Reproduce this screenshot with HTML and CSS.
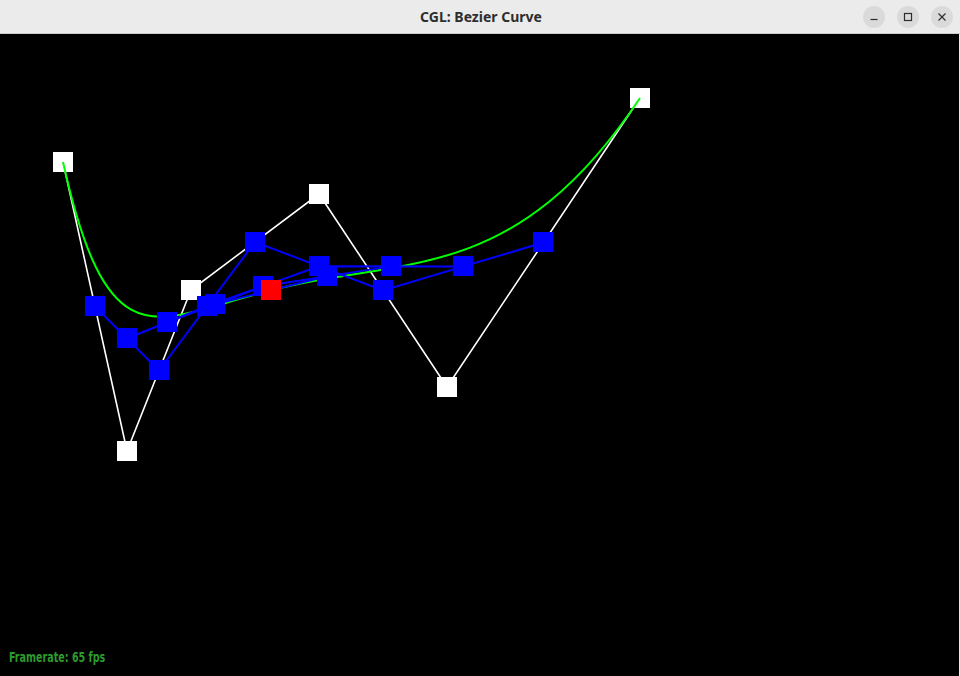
FILE: index.html
```html
<!DOCTYPE html>
<html lang="en">
<head>
<meta charset="utf-8">
<title>CGL: Bezier Curve</title>
<link rel="stylesheet" href="styles.css">
</head>
<body>
<div class="window">
  <header class="titlebar">
    <div class="title">CGL: Bezier Curve</div>
    <div class="controls">
      <button class="ctl" aria-label="Minimize">
        <svg width="10" height="10" viewBox="0 0 10 10"><path d="M1.5 7.5h7" stroke="#2e2e2e" stroke-width="1.2" fill="none"/></svg>
      </button>
      <button class="ctl" aria-label="Maximize">
        <svg width="10" height="10" viewBox="0 0 10 10"><rect x="1.5" y="1.5" width="7" height="7" stroke="#2e2e2e" stroke-width="1.2" fill="none"/></svg>
      </button>
      <button class="ctl" aria-label="Close">
        <svg width="10" height="10" viewBox="0 0 10 10"><path d="M1.5 1.5l7 7M8.5 1.5l-7 7" stroke="#2e2e2e" stroke-width="1.2" fill="none"/></svg>
      </button>
    </div>
  </header>
  <main class="canvas">
    <svg class="scene" width="959" height="642" viewBox="0 34 959 642">
      <!-- control polygon -->
      <polyline class="ctrl-line" points="63,162 127,451 191,290 319,194 447,387 640,98"/>
      <g class="sq-white">
        <rect x="53" y="152" width="20" height="20"/>
        <rect x="117" y="441" width="20" height="20"/>
        <rect x="181" y="280" width="20" height="20"/>
        <rect x="309" y="184" width="20" height="20"/>
        <rect x="437" y="377" width="20" height="20"/>
        <rect x="630" y="88" width="20" height="20"/>
      </g>
      <!-- bezier curve -->
      <path class="curve" d="M63,162
        C73.67,210.17 84.35,243.39 95.58,266.5
        C106.81,289.61 118.57,302.62 131.18,309.65
        C143.79,316.68 157.25,317.72 171.72,316.05
        C186.19,314.38 201.67,309.99 218.21,305.14
        C234.75,300.29 252.35,294.98 271.03,290.31
        C289.71,285.64 309.45,281.63 330.28,278.09
        C351.11,274.55 373.01,271.48 396.05,267.28
        C419.09,263.08 443.27,257.77 468.75,248.15
        C494.23,238.53 521.01,224.61 549.41,201.52
        C577.81,178.43 607.83,146.17 640,98"/>
      <!-- de Casteljau levels -->
      <polyline class="lvl" points="95,306.5 159,370.5 255,242 383,290.5 543.5,242.5"/>
      <polyline class="lvl" points="127,338.5 207,306.25 319,266.25 463.25,266.5"/>
      <polyline class="lvl" points="167,322.38 263,286.25 391.13,266.38"/>
      <polyline class="lvl" points="215,304.31 327.06,276.31"/>
      <g class="sq-blue">
        <rect x="85" y="296" width="20" height="20"/>
        <rect x="149" y="360" width="20" height="20"/>
        <rect x="245" y="232" width="20" height="20"/>
        <rect x="373" y="280" width="20" height="20"/>
        <rect x="533" y="232" width="20" height="20"/>
        <rect x="117" y="328" width="20" height="20"/>
        <rect x="197" y="296" width="20" height="20"/>
        <rect x="309" y="256" width="20" height="20"/>
        <rect x="453" y="256" width="20" height="20"/>
        <rect x="157" y="312" width="20" height="20"/>
        <rect x="253" y="276" width="20" height="20"/>
        <rect x="381" y="256" width="20" height="20"/>
        <rect x="205" y="294" width="20" height="20"/>
        <rect x="317" y="266" width="20" height="20"/>
      </g>
      <rect class="sq-red" x="261" y="280" width="20" height="20"/>
    </svg>
    <div class="fps">Framerate: 65 fps</div>
  </main>
</div>
</body>
</html>
```

FILE: styles.css
```css
html, body {
  margin: 0;
  padding: 0;
  width: 960px;
  height: 676px;
  overflow: hidden;
  background: #ebebeb;
}

.window {
  display: flex;
  flex-direction: column;
  width: 960px;
  height: 676px;
}

.titlebar {
  flex: 0 0 33px;
  position: relative;
  display: flex;
  align-items: center;
  justify-content: center;
  background: #ebebeb;
  border-bottom: 1px solid #cdcdcd;
}

.title {
  font-family: "Noto Sans", "Open Sans", sans-serif;
  font-weight: 700;
  font-size: 14px;
  color: #2e2e2e;
  padding-left: 2px;
}

.controls {
  position: absolute;
  right: 7px;
  top: 6px;
  display: flex;
  gap: 12px;
}

.ctl {
  width: 22px;
  height: 22px;
  border: none;
  border-radius: 50%;
  background: #dadada;
  padding: 0;
  display: flex;
  align-items: center;
  justify-content: center;
}

.ctl svg {
  display: block;
}

.canvas {
  flex: 1;
  position: relative;
  background: #000;
  margin-right: 1px;
  overflow: hidden;
}

.scene {
  display: block;
}

.ctrl-line {
  fill: none;
  stroke: #ffffff;
  stroke-width: 1.6;
}

.sq-white rect {
  fill: #ffffff;
  shape-rendering: crispEdges;
}

.curve {
  fill: none;
  stroke: #00ff00;
  stroke-width: 2;
  stroke-linejoin: round;
}

.lvl {
  fill: none;
  stroke: #0000ff;
  stroke-width: 2;
}

.sq-blue rect {
  fill: #0000ff;
  shape-rendering: crispEdges;
}

.sq-red {
  fill: #ff0000;
  shape-rendering: crispEdges;
}

.fps {
  position: absolute;
  left: 9px;
  bottom: 11px;
  font-family: "DejaVu Sans Condensed", "Liberation Sans Narrow", "Noto Sans", sans-serif;
  font-stretch: condensed;
  font-weight: 700;
  font-size: 14px;
  color: #2c9a2c;
  line-height: 16px;
  transform: scaleX(0.76);
  transform-origin: left center;
}
```
